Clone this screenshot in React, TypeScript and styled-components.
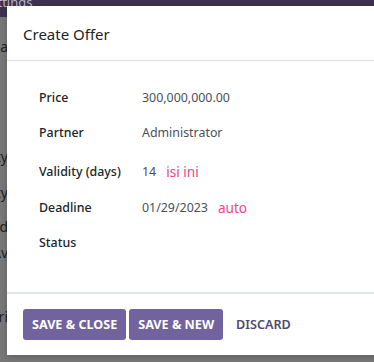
import React from 'react'
import styled, { createGlobalStyle } from 'styled-components'

const GlobalStyle = createGlobalStyle`
    html, body {
        margin: 0;
        padding: 0;
        overflow: hidden;
    }
    body {
        font-family: 'Noto Sans', 'Open Sans', sans-serif;
    }
`

const Screen = styled.div`
    position: relative;
    width: 374px;
    height: 362px;
    overflow: hidden;
    background: #777777;
`

const NavBar = styled.div`
    height: 22px;
    background: #3d3150;
    color: #b9b4c2;
    font-size: 13px;
    line-height: 14px;
    display: flex;
    align-items: flex-start;
    margin-left: -17px;
    margin-top: -5px;
`

const BackForm = styled.div`
    display: flex;
    flex-direction: column;
    align-items: flex-end;
    width: 8px;
    overflow: hidden;
    color: #1e1e1e;
    font-size: 14px;
    padding-top: 6px;
`

const BackLine = styled.div<{ top: number }>`
    margin-top: ${(p) => p.top}px;
    white-space: nowrap;
    line-height: 16px;
`

const Modal = styled.div`
    position: absolute;
    left: 7px;
    top: 6px;
    width: 400px;
    bottom: 7px;
    background: #fff;
    display: flex;
    flex-direction: column;
    box-shadow: 0 2px 6px rgba(0, 0, 0, 0.2);
`

const Header = styled.div`
    height: 55px;
    display: flex;
    align-items: center;
    padding: 1px 0 0 16px;
    border-bottom: 1px solid #dee2e6;
    box-sizing: border-box;
`

const Title = styled.h4`
    margin: 0;
    font-size: 15px;
    font-weight: 400;
    color: #212529;
`

const Body = styled.div`
    flex: 1;
    padding: 19px 0 0 32px;
    display: flex;
    flex-direction: column;
`

const Row = styled.div<{ tall?: boolean }>`
    display: grid;
    grid-template-columns: 103px 1fr;
    align-items: center;
    height: 35px;
    margin: ${(p) => (p.tall ? '4px 0 1px' : '0')};
    font-size: 12.4px;
`

const Label = styled.div`
    color: #212529;
    font-weight: 500;
`

const Value = styled.div`
    color: #4c5058;
    display: flex;
    align-items: center;
    gap: 10px;
`

const Hint = styled.span`
    color: #f0468a;
    font-size: 13.6px;
`

const Footer = styled.div`
    border-top: 2px solid #e2e5e8;
    padding: 15px 16px;
    display: flex;
    align-items: center;
    gap: 3px;
`

const Button = styled.button<{ primary?: boolean }>`
    height: 31px;
    border: none;
    border-radius: 3px;
    padding: 0 ${(p) => (p.primary ? 9 : 10)}px;
    font-family: inherit;
    font-size: 12.6px;
    font-weight: ${(p) => (p.primary ? 700 : 600)};
    text-transform: uppercase;
    background: ${(p) => (p.primary ? '#71639e' : 'transparent')};
    color: ${(p) => (p.primary ? '#ffffff' : '#4f4a6d')};
    cursor: pointer;
`

const fields = [
    { label: 'Price', value: '300,000,000.00' },
    { label: 'Partner', value: 'Administrator' },
    { label: 'Validity (days)', value: '14', hint: 'isi ini', tall: true },
    { label: 'Deadline', value: '01/29/2023', hint: 'auto' },
    { label: 'Status', value: '' },
]

export default function App() {
    return (
        <Screen>
            <GlobalStyle />
            <NavBar>Settings</NavBar>
            <BackForm>
                <BackLine top={16}>Dia</BackLine>
                <BackLine top={94}>Validity</BackLine>
                <BackLine top={20}>Property</BackLine>
                <BackLine top={18}>Dd</BackLine>
                <BackLine top={10}>Av</BackLine>
                <BackLine top={48}>Pri</BackLine>
            </BackForm>
            <Modal>
                <Header>
                    <Title>Create Offer</Title>
                </Header>
                <Body>
                    {fields.map((f) => (
                        <Row key={f.label} tall={f.tall}>
                            <Label>{f.label}</Label>
                            <Value>
                                {f.value}
                                {f.hint && <Hint>{f.hint}</Hint>}
                            </Value>
                        </Row>
                    ))}
                </Body>
                <Footer>
                    <Button primary>Save &amp; Close</Button>
                    <Button primary>Save &amp; New</Button>
                    <Button>Discard</Button>
                </Footer>
            </Modal>
        </Screen>
    )
}
